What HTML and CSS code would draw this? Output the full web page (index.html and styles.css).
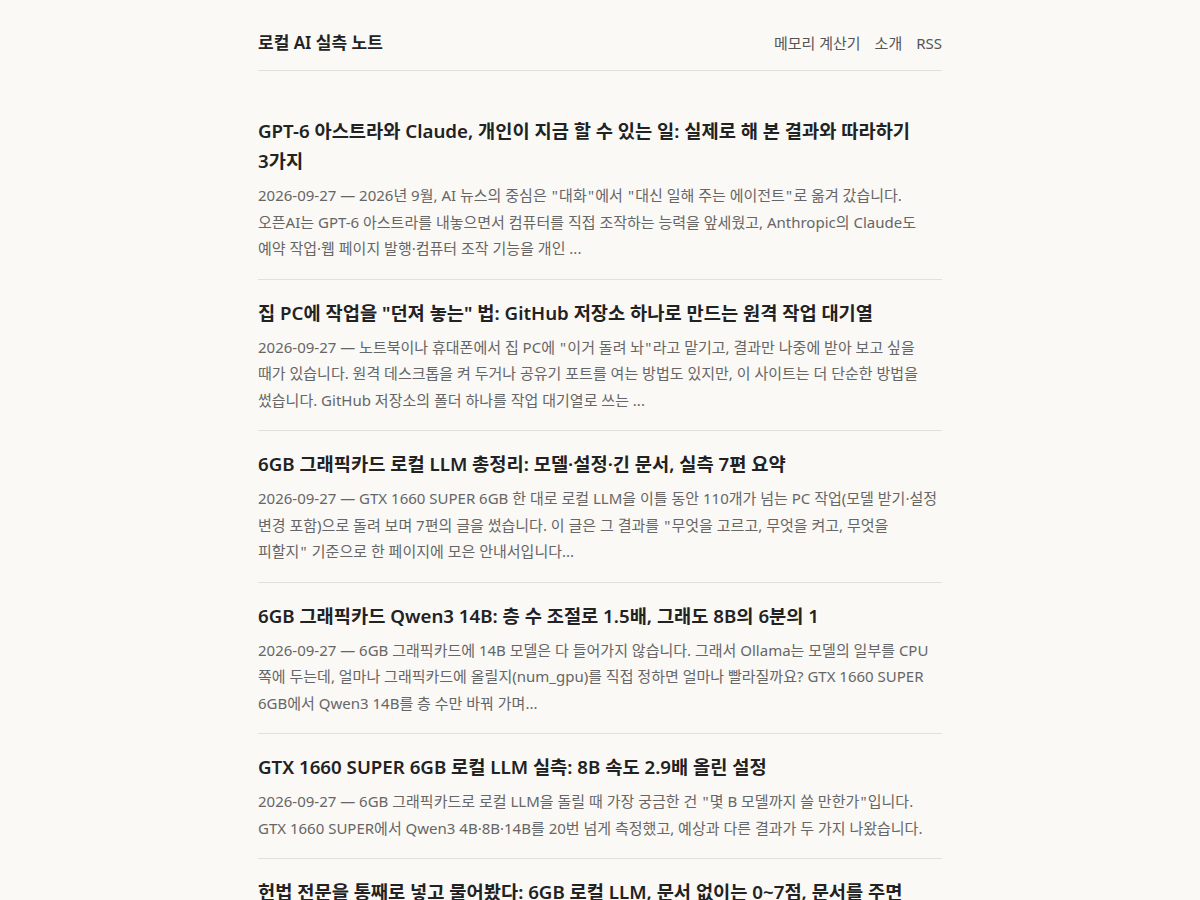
FILE: index.html
```html
<!DOCTYPE html>
<html lang="ko">
<head>
<meta charset="utf-8">
<title>로컬 AI 실측 노트</title>
<link rel="stylesheet" href="styles.css">
</head>
<body>
<div class="wrap">
  <header class="site-header">
    <a class="site-title" href="#">로컬 AI 실측 노트</a>
    <nav class="site-nav">
      <a href="#">메모리 계산기</a>
      <a href="#">소개</a>
      <a href="#">RSS</a>
    </nav>
  </header>
  <main class="post-list">
    <article class="post">
      <h2 class="post-title"><a href="#">GPT-6 아스트라와 Claude, 개인이 지금 할 수 있는 일: 실제로 해 본 결과와 따라하기 3가지</a></h2>
      <p class="post-excerpt">2026-09-27 — 2026년 9월, AI 뉴스의 중심은 <q>대화</q>에서 <q>대신 일해 주는 에이전트</q>로 옮겨 갔습니다. 오픈AI는 GPT-6 아스트라를 내놓으면서 컴퓨터를 직접 조작하는 능력을 앞세웠고, Anthropic의 Claude도 예약 작업·웹 페이지 발행·컴퓨터 조작 기능을 개인 ...</p>
    </article>
    <article class="post">
      <h2 class="post-title"><a href="#">집 PC에 작업을 <q>던져 놓는</q> 법: GitHub 저장소 하나로 만드는 원격 작업 대기열</a></h2>
      <p class="post-excerpt">2026-09-27 — 노트북이나 휴대폰에서 집 PC에 <q>이거 돌려 놔</q>라고 맡기고, 결과만 나중에 받아 보고 싶을 때가 있습니다. 원격 데스크톱을 켜 두거나 공유기 포트를 여는 방법도 있지만, 이 사이트는 더 단순한 방법을 썼습니다. GitHub 저장소의 폴더 하나를 작업 대기열로 쓰는 ...</p>
    </article>
    <article class="post">
      <h2 class="post-title"><a href="#">6GB 그래픽카드 로컬 LLM 총정리: 모델·설정·긴 문서, 실측 7편 요약</a></h2>
      <p class="post-excerpt">2026-09-27 — GTX 1660 SUPER 6GB 한 대로 로컬 LLM을 이틀 동안 110개가 넘는 PC 작업(모델 받기·설정 변경 포함)으로 돌려 보며 7편의 글을 썼습니다. 이 글은 그 결과를 <q>무엇을 고르고, 무엇을 켜고, 무엇을 피할지</q> 기준으로 한 페이지에 모은 안내서입니다...</p>
    </article>
    <article class="post">
      <h2 class="post-title"><a href="#">6GB 그래픽카드 Qwen3 14B: 층 수 조절로 1.5배, 그래도 8B의 6분의 1</a></h2>
      <p class="post-excerpt">2026-09-27 — 6GB 그래픽카드에 14B 모델은 다 들어가지 않습니다. 그래서 Ollama는 모델의 일부를 CPU 쪽에 두는데, 얼마나 그래픽카드에 올릴지(num_gpu)를 직접 정하면 얼마나 빨라질까요? GTX 1660 SUPER 6GB에서 Qwen3 14B를 층 수만 바꿔 가며...</p>
    </article>
    <article class="post">
      <h2 class="post-title"><a href="#">GTX 1660 SUPER 6GB 로컬 LLM 실측: 8B 속도 2.9배 올린 설정</a></h2>
      <p class="post-excerpt">2026-09-27 — 6GB 그래픽카드로 로컬 LLM을 돌릴 때 가장 궁금한 건 <q>몇 B 모델까지 쓸 만한가</q>입니다. GTX 1660 SUPER에서 Qwen3 4B·8B·14B를 20번 넘게 측정했고, 예상과 다른 결과가 두 가지 나왔습니다.</p>
    </article>
    <article class="post">
      <h2 class="post-title"><a href="#">헌법 전문을 통째로 넣고 물어봤다: 6GB 로컬 LLM, 문서 없이는 0~7점, 문서를 주면 만점에 가까워졌다</a></h2>
      <p class="post-excerpt">2026-09-27 — 긴 문서를 통째로 넣으면 6GB 그래픽카드의 로컬 LLM도 정확하게 답할 수 있을까요? 헌법 전문을 넣고 같은 질문을 던져 봤습니다...</p>
    </article>
  </main>
</div>
</body>
</html>
```

FILE: styles.css
```css
html, body {
  margin: 0;
  padding: 0;
  background: #faf9f6;
}
body {
  font-family: "Noto Sans", "Noto Sans CJK KR", sans-serif;
  color: #222;
  word-break: keep-all;
}
a {
  color: inherit;
  text-decoration: none;
}
q {
  quotes: '"' '"' "'" "'";
}
.wrap {
  max-width: 684px;
  margin: 0 auto;
}
.site-header {
  display: flex;
  justify-content: space-between;
  align-items: center;
  padding: 29px 0 13px;
  border-bottom: 1px solid #e3e1dc;
}
.site-title {
  font-size: 17px;
  font-weight: 600;
  line-height: 28px;
  color: #222;
}
.site-nav {
  display: flex;
  gap: 14px;
  font-size: 15px;
  line-height: 28px;
}
.site-nav a {
  color: #555;
}
.post-list {
  padding-top: 27px;
}
.post {
  padding: 18px 0 17px;
  border-bottom: 1px solid #e3e1dc;
}
.post-title {
  margin: 0 0 6px;
  font-size: 18.7px;
  font-weight: 600;
  line-height: 30px;
  color: #222;
}
.post-excerpt {
  margin: 0;
  font-size: 15px;
  line-height: 26.5px;
  color: #666;
}
.post-excerpt q::before,
.post-excerpt q::after {
  margin: 0 0.08em;
}
```
